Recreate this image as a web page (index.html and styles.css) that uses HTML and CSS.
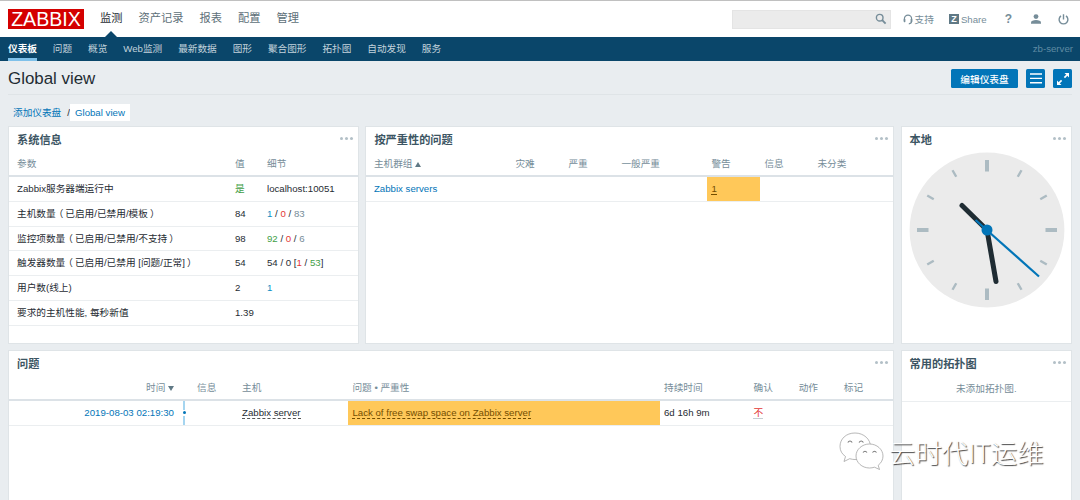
FILE: index.html
```html
<!DOCTYPE html>
<html lang="zh-CN">
<head>
    <meta charset="UTF-8">
    <meta name="viewport" content="width=device-width, initial-scale=1.0">
    <title>Zabbix: Global view</title>
    <link rel="stylesheet" href="styles.css">
</head>
<body>
    <header class="top">
        <a class="logo">ZABBIX</a>
        <nav class="top-nav">
            <a class="selected">监测</a>
            <a>资产记录</a>
            <a>报表</a>
            <a>配置</a>
            <a>管理</a>
        </nav>
        <div class="search">
            <svg width="12" height="12" viewBox="0 0 12 12"><circle cx="4.7" cy="4.7" r="3.3" fill="none" stroke="#768d99" stroke-width="1.4"/><path d="M7.2 7.2L10.6 10.6" stroke="#768d99" stroke-width="1.9"/></svg>
        </div>
        <a class="support">
            <svg width="10" height="11" viewBox="0 0 10 11"><path d="M1.4 7V4.7a3.6 3.6 0 0 1 7.2 0V7c0 1.8-1 2.7-2.8 2.8" fill="none" stroke="#768d99" stroke-width="1.2"/><rect x=".7" y="4.8" width="1.7" height="3.4" rx=".6" fill="#768d99"/><rect x="7.6" y="4.8" width="1.7" height="3.4" rx=".6" fill="#768d99"/></svg>
            <span>支持</span>
        </a>
        <a class="share"><span class="z">Z</span><span>Share</span></a>
        <a class="help">?</a>
        <a class="profile">
            <svg width="10" height="10" viewBox="0 0 10 10"><circle cx="5" cy="2.6" r="2.4" fill="#768d99"/><path d="M0 9.8V8.4C0 7 2.4 6.1 5 6.1s5 .9 5 2.3v1.4z" fill="#768d99"/></svg>
        </a>
        <a class="signout">
            <svg width="11" height="11" viewBox="0 0 11 11"><path d="M3 1.9a4.4 4.4 0 1 0 5 0M5.5.3v5.2" fill="none" stroke="#768d99" stroke-width="1.4"/></svg>
        </a>
    </header>

    <nav class="sub-nav">
        <a class="selected">仪表板</a>
        <a>问题</a>
        <a>概览</a>
        <a>Web监测</a>
        <a>最新数据</a>
        <a>图形</a>
        <a>聚合图形</a>
        <a>拓扑图</a>
        <a>自动发现</a>
        <a>服务</a>
        <span class="server-name">zb-server</span>
    </nav>

    <main>
        <div class="title-bar">
            <h1>Global view</h1>
            <button class="btn-edit">编辑仪表盘</button>
            <button class="btn-icon">
                <svg width="12" height="11" viewBox="0 0 12 11"><path d="M0 1h12M0 5.4h12M0 9.8h12" stroke="#fff" stroke-width="1.4"/></svg>
            </button>
            <button class="btn-icon">
                <svg width="12" height="12" viewBox="0 0 12 12"><path d="M7.5 0H12v4.5zM0 7.5V12h4.5z" fill="#fff"/><path d="M7.4 4.6L10 2M4.6 7.4L2 10" stroke="#fff" stroke-width="1.7"/></svg>
            </button>
        </div>

        <div class="breadcrumbs">
            <a>添加仪表盘</a>
            <span class="slash">/</span>
            <a class="current">Global view</a>
        </div>

        <div class="dashboard">
            <section class="widget sysinfo">
                <h4>系统信息</h4><i class="dots"></i>
                <div class="row head"><span>参数</span><span>值</span><span>细节</span></div>
                <div class="row"><span>Zabbix服务器端运行中</span><span class="green">是</span><span>localhost:10051</span></div>
                <div class="row"><span>主机数量<i class="open">（</i>已启用/已禁用/模板<i class="close">）</i></span><span>84</span><span><em class="blue">1</em> / <em class="red">0</em> / <em class="grey">83</em></span></div>
                <div class="row"><span>监控项数量<i class="open">（</i>已启用/已禁用/不支持<i class="close">）</i></span><span>98</span><span><em class="green">92</em> / <em class="red">0</em> / <em class="grey">6</em></span></div>
                <div class="row"><span>触发器数量<i class="open">（</i>已启用/已禁用 [问题/正常]<i class="close">）</i></span><span>54</span><span>54 / 0 [<em class="red">1</em> / <em class="green">53</em>]</span></div>
                <div class="row"><span>用户数(线上)</span><span>2</span><span class="blue">1</span></div>
                <div class="row"><span>要求的主机性能, 每秒新值</span><span>1.39</span><span></span></div>
            </section>

            <section class="widget severity">
                <h4>按严重性的问题</h4><i class="dots"></i>
                <div class="row head"><span>主机群组 <i class="arrow up"></i></span><span>灾难</span><span>严重</span><span>一般严重</span><span>警告</span><span>信息</span><span>未分类</span></div>
                <div class="row"><span class="link">Zabbix servers</span><span></span><span></span><span></span><span class="warning"><u>1</u></span><span></span><span></span></div>
            </section>

            <section class="widget">
                <h4>本地</h4><i class="dots"></i>
                <svg class="clock" width="156" height="156" viewBox="-78 -78 156 156">
                    <circle r="77.4" fill="#ebebeb"/>
                    <path d="M0-70V-58.5M0 70V58.5M-70 0H-58.5M70 0H58.5" stroke="#acbbc2" stroke-width="4"/>
                    <g stroke="#acbbc2" stroke-width="2.4">
                        <path d="M0-69V-61.5M0 69V61.5" transform="rotate(30)"/>
                        <path d="M0-69V-61.5M0 69V61.5" transform="rotate(60)"/>
                        <path d="M0-69V-61.5M0 69V61.5" transform="rotate(120)"/>
                        <path d="M0-69V-61.5M0 69V61.5" transform="rotate(150)"/>
                    </g>
                    <path d="M0 0L-25-24.5M0 0L9 51.5" stroke="#1f2c33" stroke-width="5" stroke-linecap="round"/>
                    <path d="M-11.5-10L52 46.5" stroke="#0275b8" stroke-width="2.2"/>
                    <circle r="5.5" fill="#0275b8"/>
                </svg>
            </section>

            <section class="widget problems">
                <h4>问题</h4><i class="dots"></i>
                <div class="row head"><span>时间 <i class="arrow down"></i></span><span></span><span>信息</span><span>主机</span><span>问题 • 严重性</span><span>持续时间</span><span>确认</span><span>动作</span><span>标记</span></div>
                <div class="row"><span class="link">2019-08-03 02:19:30</span><span class="timeline"><i></i></span><span></span><span><u>Zabbix server</u></span><span class="warning"><u>Lack of free swap space on Zabbix server</u></span><span>6d 16h 9m</span><span class="red"><u class="ack">不</u></span><span></span><span></span></div>
            </section>

            <section class="widget">
                <h4>常用的拓扑图</h4><i class="dots"></i>
                <div class="empty">未添加拓扑图.</div>
            </section>
        </div>
    </main>

    <div class="watermark">
        <svg width="46" height="40" viewBox="0 0 46 40">
            <g fill="#fff" stroke="#999" stroke-width=".7">
                <path d="M16 1C7 1 1 7 1 14.5c0 4.2 2 7.6 5.5 10L5 29.5l5.7-2.8c2 .6 3.6.8 5.3.8 9 0 15.5-6 15.5-13S25 1 16 1z"/>
                <path d="M30.5 12C23 12 17 17.5 17 24s6 12 13.5 12c1.7 0 3.4-.3 5-.8l5 2.3-1.3-4.2c3-2.3 4.8-5.6 4.8-9.3 0-6.5-6-12-13.5-12z"/>
            </g>
            <path d="M8.8 10.5q2.2-3 4.4 0M20 10.5q2.2-3 4.4 0M24 20.5q2-2.6 4 0M33.5 20.5q2-2.6 4 0" fill="none" stroke="#777" stroke-width="1.1"/>
        </svg>
        <span>云时代IT运维</span>
    </div>
</body>
</html>
```
FILE: styles.css
```css
* {
    box-sizing: border-box;
}
body {
    margin: 0;
    height: 500px;
    overflow: hidden;
    background-color: #e9edf0;
    color: #1f2c33;
    font-family: "Liberation Sans", "Noto Sans CJK SC", sans-serif;
    font-size: 9.67px;
}
a {
    white-space: nowrap;
}
i, em {
    font-style: normal;
}

/* header */
.top {
    display: flex;
    align-items: center;
    height: 37px;
    padding: 0 11px 0 8px;
    border-top: 1px solid #c0c0c0;
    background-color: #fff;
    color: #768d99;
}
.logo {
    width: 76px;
    height: 20px;
    background-color: #d40000;
    color: #fff;
    font-size: 19.6px;
    line-height: 21px;
    text-align: center;
}
.top-nav {
    display: flex;
    flex: 1;
    gap: 16px;
    align-self: stretch;
    margin-left: 16px;
    color: #5d6f78;
    font-size: 11.25px;
    line-height: 35px;
}
.top-nav .selected {
    display: flex;
    flex-direction: column;
    align-items: center;
    color: #1f2c33;
}
.top-nav .selected::after {
    content: "";
    margin-top: -5px;
    border: 6px solid transparent;
    border-top: 0;
    border-bottom-color: #0a466a;
}
.search {
    display: flex;
    align-items: center;
    justify-content: flex-end;
    width: 159px;
    height: 19px;
    padding-right: 3px;
    border: 1px solid #e4e4e4;
    background-color: #ebebeb;
}
.support, .share {
    display: flex;
    align-items: center;
    gap: 2px;
}
.support {
    margin-left: 12px;
}
.share {
    margin-left: 15px;
}
.z {
    width: 10px;
    height: 10px;
    background-color: #607985;
    color: #fff;
    font-size: 9px;
    font-weight: bold;
    line-height: 10px;
    text-align: center;
}
.help {
    margin-left: 18px;
    font-size: 12px;
    font-weight: bold;
}
.profile {
    margin-left: 19px;
}
.signout {
    margin-left: 17px;
}
.profile svg, .signout svg {
    display: block;
}

.sub-nav {
    display: flex;
    gap: 15.9px;
    height: 24px;
    padding: 0 7px 0 8px;
    background-color: #0a466a;
    color: #c3d3dc;
    line-height: 23px;
}
.sub-nav .selected {
    border-bottom: 3px solid #7fc1ea;
    color: #fff;
    font-weight: bold;
}
.server-name {
    margin-left: auto;
    color: #5f8ba3;
}

/* page title */
main {
    padding: 0 8px;
}
.title-bar {
    display: flex;
    align-items: center;
    height: 34px;
    padding-top: 2px;
    border-bottom: 1px solid #dfe4e7;
}
h1 {
    flex: 1;
    margin: 0;
    font-size: 16.9px;
    font-weight: normal;
}
button {
    display: flex;
    align-items: center;
    justify-content: center;
    height: 19px;
    padding: 0;
    border: 0;
    border-radius: 1.5px;
    background-color: #0275b8;
    color: #fff;
    font-family: inherit;
    font-size: 9.67px;
    font-weight: 500;
}
.btn-edit {
    width: 67px;
}
.btn-icon {
    width: 19px;
    margin-left: 8px;
}
.breadcrumbs {
    display: flex;
    align-items: center;
    height: 31px;
    padding: 3px 0 0 5px;
    color: #0275b8;
}
.slash {
    margin: 0 0 0 6px;
    color: #1f2c33;
}
.current {
    height: 17px;
    padding: 0 5px;
    background-color: #fff;
    line-height: 17px;
}

/* widgets */
.dashboard {
    display: grid;
    grid-template-columns: 351px 528.8px 171.4px;
    grid-template-rows: 218px 150px;
    gap: 6px 6.4px;
}
.widget {
    position: relative;
    border: 1px solid #dfe4e7;
    background-color: #fff;
}
.problems {
    grid-column: span 2;
}
.problems, .problems + .widget {
    border-bottom: 0;
}
h4 {
    margin: 0;
    height: 25px;
    padding-left: 8px;
    color: #3c5563;
    font-size: 11.2px;
    line-height: 26px;
}
.dots {
    position: absolute;
    top: 10px;
    right: 14px;
    width: 3px;
    height: 3px;
    border-radius: 50%;
    background-color: #b3c0c7;
    box-shadow: 5px 0 #b3c0c7, 10px 0 #b3c0c7;
}
.dots {
    right: 15px;
}
.row {
    display: flex;
    height: 24.85px;
    border-bottom: 1px solid #ebeef0;
    line-height: 24px;
    white-space: nowrap;
}
.row span {
    flex: none;
    padding-left: 4px;
}
.row span:first-child {
    padding-left: 8px;
}
.row.head {
    border-bottom: 2px solid #dce2e7;
    color: #768d99;
}
.open {
    margin: 0 2px 0 -2px;
}
.close {
    margin: 0 -2px 0 2px;
}
.sysinfo span:nth-child(1) {
    width: 222px;
}
.sysinfo span:nth-child(2) {
    width: 32px;
}
.severity span {
    width: 53px;
}
.severity span:nth-child(1) {
    width: 145px;
    padding-left: 7.5px;
}
.severity span:nth-child(4) {
    width: 90px;
}
.problems span:nth-child(1) {
    width: 165px;
    text-align: right;
}
.problems span:nth-child(2) {
    width: 19px;
}
.problems span:nth-child(3) {
    width: 45px;
}
.problems span:nth-child(4) {
    width: 110.4px;
}
.problems span:nth-child(5) {
    width: 311.6px;
}
.problems span:nth-child(6) {
    width: 89.5px;
}
.problems span:nth-child(7), .problems span:nth-child(8) {
    width: 45.2px;
}
.arrow {
    display: inline-block;
    border: 3px solid transparent;
}
.up {
    border-top: 0;
    border-bottom: 5px solid #607985;
}
.down {
    border-bottom: 0;
    border-top: 5px solid #607985;
}
.row .warning {
    background-color: #ffc859;
    color: #734d00;
}
u {
    border-bottom: 1px dashed #555;
    text-decoration: none;
}
.warning u {
    border-bottom-color: #734d00;
}
.row .ack {
    border-bottom: 1px solid #c5cdd2;
}
.row .timeline {
    display: flex;
    align-items: center;
    padding-left: 9px;
    background: linear-gradient(#a5d5f0 0 9px, #fff 9px 15px, #a5d5f0 15px) 9px 0 / 2px 100% no-repeat;
}
.timeline i {
    width: 3px;
    height: 3px;
    margin-left: -.5px;
    border-radius: 50%;
    background-color: #0275b8;
}
.link {
    color: #0275b8;
}
.blue {
    color: #0b8fc4;
}
.green {
    color: #429e47;
}
.red {
    color: #e33734;
}
.grey {
    color: #768d99;
}
.clock {
    display: block;
    margin: 0 0 0 7px;
}
.empty {
    height: 26px;
    border-bottom: 1px solid #ebeef0;
    color: #768d99;
    line-height: 26px;
    text-align: center;
}

/* channel mark over the widgets */
.watermark {
    position: absolute;
    left: 839px;
    top: 432px;
    display: flex;
    align-items: center;
    gap: 4px;
    color: #fff;
    font-family: "Noto Sans CJK SC", sans-serif;
    font-size: 26.4px;
    font-weight: 300;
    line-height: 40px;
    text-shadow: 1px 1px 1px #444;
}
```
